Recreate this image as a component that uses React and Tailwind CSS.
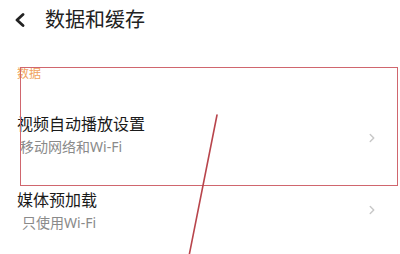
import { ChevronRight } from "lucide-react";

const Row = ({ title, sub, subPad, chevronPad }) => {
  return (
    <div className="flex items-center justify-between pr-[21px]">
      <div className="flex flex-col gap-[3px]">
        <span className="text-[16px] leading-[20px] text-[#1a1a1a]">{title}</span>
        <span className={`text-[14px] leading-[20px] text-[#8a8a8a] ${subPad}`}>{sub}</span>
      </div>
      <ChevronRight size={14} strokeWidth={2.5} className={`text-[#c8c8c8] ${chevronPad}`} />
    </div>
  );
};

const App = () => {
  return (
    <div
      className="relative w-[400px] h-[254px] overflow-hidden bg-white"
      style={{ fontFamily: '"Noto Sans", "Noto Sans CJK SC", sans-serif' }}
    >
      {/* header */}
      <div className="flex items-center h-[40px] pl-[14px] gap-[18px]">
        <svg width="13" height="14" viewBox="0 0 13 14" fill="none">
          <path d="M9 1.5 L3 7 L9 12.5" stroke="#222" strokeWidth="2.8" strokeLinecap="round" strokeLinejoin="round" />
        </svg>
        <span className="text-[20px] leading-[24px] text-[#222]">数据和缓存</span>
      </div>

      <div className="flex flex-col pl-[17px] pt-[26px]">
        <span className="text-[12px] leading-[16px] text-[#f0a35e]">数据</span>
        <div className="mt-[32px]">
          <Row title="视频自动播放设置" sub="移动网络和Wi-Fi" subPad="pl-[3px]" chevronPad="mt-[4px]" />
        </div>
        <div className="mt-[33px]">
          <Row title="媒体预加载" sub="只使用Wi-Fi" subPad="pl-[5px]" chevronPad="mb-[4px]" />
        </div>
      </div>

      {/* annotation */}
      <div className="absolute left-[20px] top-[67px] w-[378px] h-[119px] border-[1.5px] border-[#d0666e]" />
      <svg className="absolute left-0 top-0" width="400" height="254">
        <line x1="217" y1="115" x2="189" y2="256" stroke="#b8454c" strokeWidth="1.6" strokeLinecap="round" />
      </svg>
    </div>
  );
};

export default App;
